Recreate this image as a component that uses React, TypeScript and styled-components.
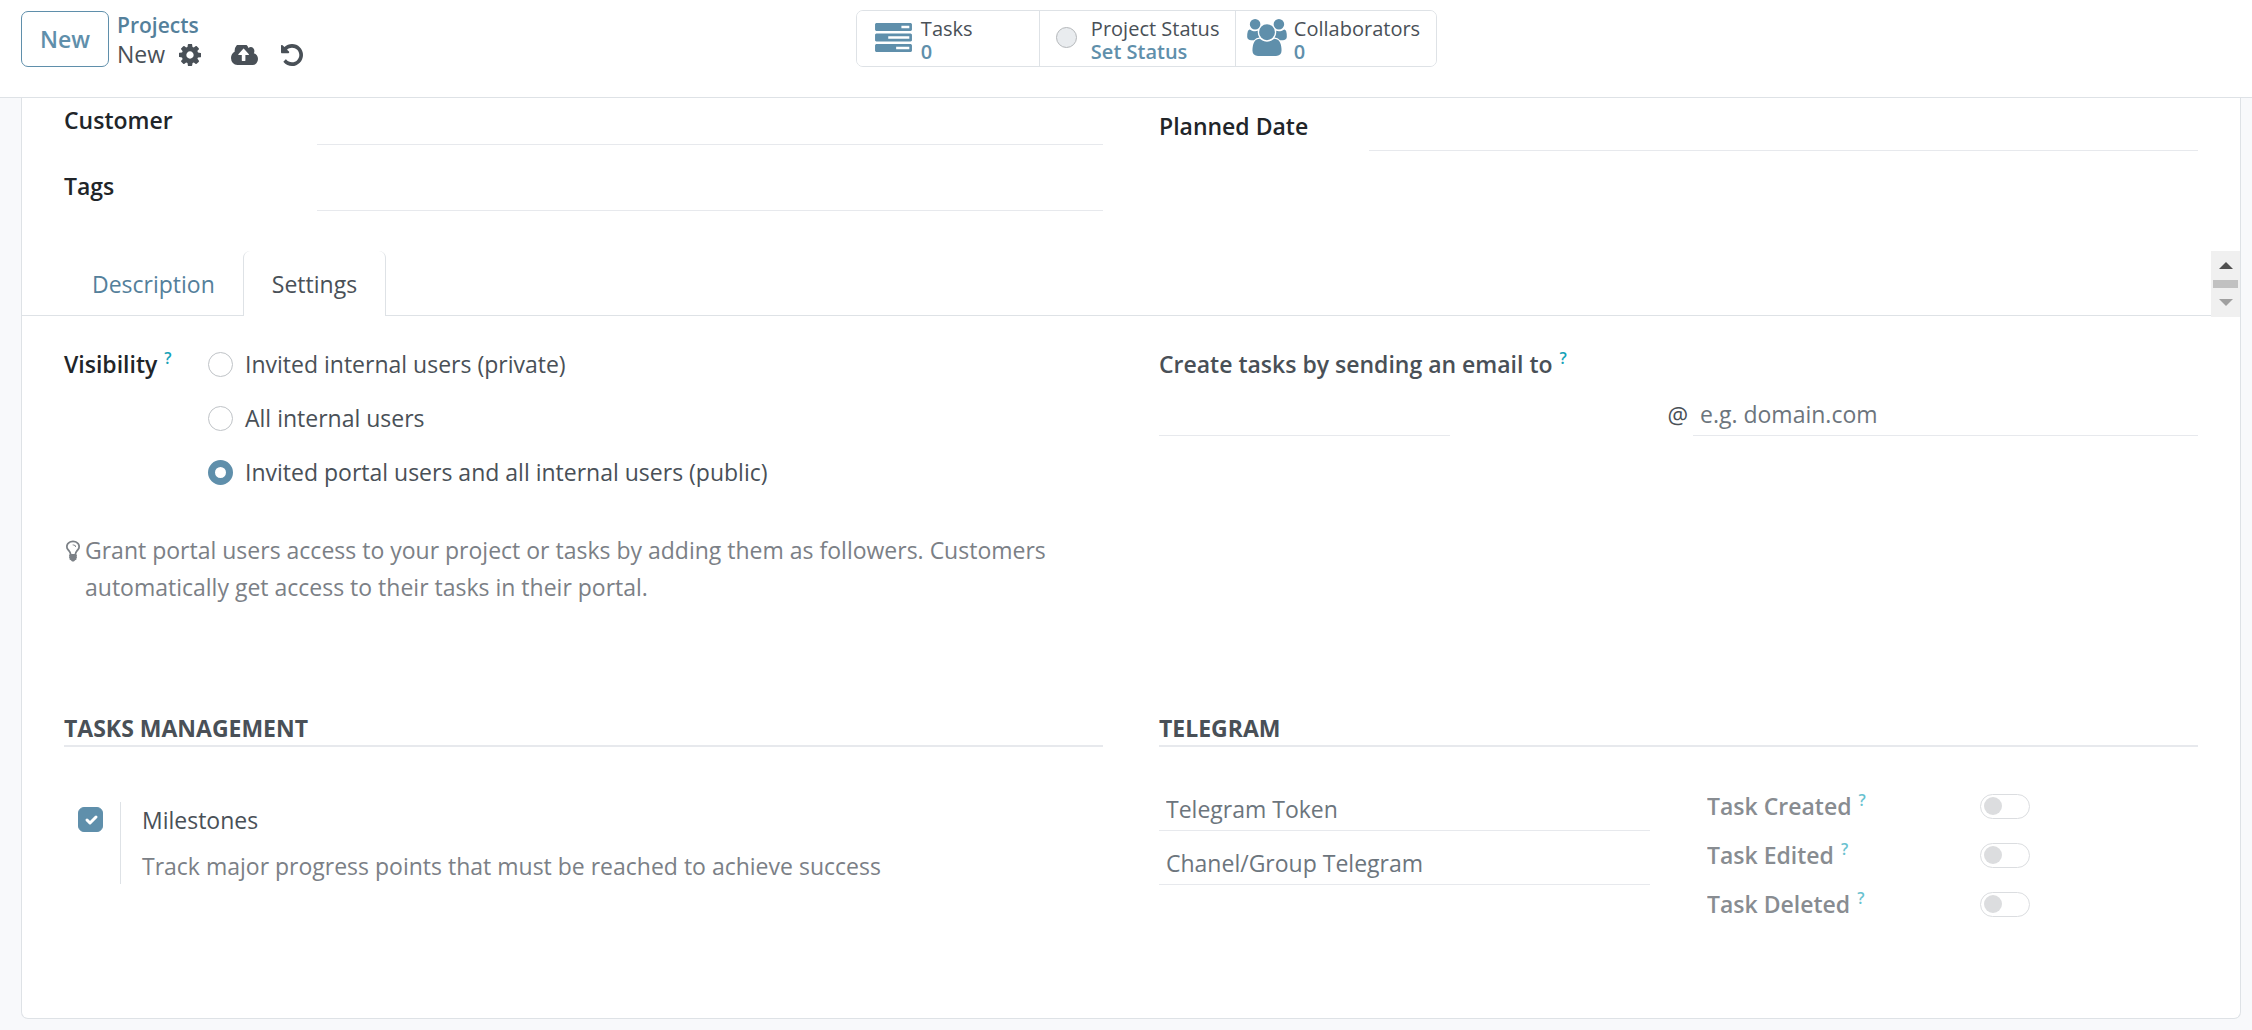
import React, { useId, useState } from "react";
import styled, { createGlobalStyle } from "styled-components";

const GlobalStyle = createGlobalStyle`
  *, *::before, *::after { box-sizing: border-box; }
  body {
    margin: 0;
    background: #f8f9fb;
    color: #495057;
    font-family: "Open Sans", "Noto Sans", sans-serif;
    font-size: 23px;
    line-height: 36px;
  }
  button, input { font: inherit; color: inherit; }
  h2, p { margin: 0; font: inherit; }
`;

const accent = "#5f8fab";
const line = "#dee2e6";
const softLine = "#e7e9ed";

/* ---------- icons ---------- */

const Svg = styled.svg<{ $w: number; $h: number }>`
  display: block;
  flex: none;
  width: ${(p) => p.$w}px;
  height: ${(p) => p.$h}px;
  fill: currentColor;
`;

const GearIcon = () => (
  <Svg $w={22} $h={22} viewBox="128 128 1536 1536" aria-hidden="true">
    <path d="M1152 896q0-106-75-181t-181-75-181 75-75 181 75 181 181 75 181-75 75-181zm512-109v222q0 12-8 23t-20 13l-185 28q-19 54-39 91 35 50 107 138 10 12 10 25t-9 23q-27 37-99 108t-94 71q-12 0-26-9l-138-108q-44 23-91 38-16 136-29 186-7 28-36 28h-222q-14 0-24.5-8.5t-11.5-21.5l-28-184q-49-16-90-37l-141 107q-10 9-25 9-14 0-25-11-126-114-165-168-7-10-7-23 0-12 8-23 15-21 51-66.5t54-70.5q-27-50-41-99l-183-27q-13-2-21-12.5t-8-23.5v-222q0-12 8-23t19-13l186-28q14-46 39-92-40-57-107-138-10-12-10-24 0-10 9-23 26-36 98.5-107.5t94.5-71.5q13 0 26 10l138 107q44-23 91-38 16-136 29-186 7-28 36-28h222q14 0 24.5 8.5t11.5 21.5l28 184q49 16 90 37l142-107q9-9 24-9 13 0 25 10 129 119 165 170 7 8 7 22 0 12-8 23-15 21-51 66.5t-54 70.5q26 50 41 98l183 28q13 2 21 12.5t8 23.5z" />
  </Svg>
);

const CloudUploadIcon = () => (
  <Svg $w={27} $h={20} viewBox="-64 256 1920 1280" preserveAspectRatio="none" aria-hidden="true">
    <path d="M1216 864q0-14-9-23l-352-352q-9-9-23-9t-23 9l-351 351q-10 12-10 24 0 14 9 23t23 9h224v352q0 13 9.500 22.500t22.500 9.500h192q13 0 22.500-9.500t9.500-22.500v-352h224q13 0 22.500-9.500t9.500-22.500zm640 288q0 159-112.500 271.500t-271.500 112.500h-1088q-185 0-316.500-131.500t-131.500-316.500q0-130 70-240t188-165q-2-30-2-43 0-212 150-362t362-150q156 0 285.500 87t188.500 231q71-62 166-62 106 0 181 75t75 181q0 76-41 138 130 31 213.500 135.500t83.500 238.500z" />
  </Svg>
);

const UndoIcon = () => (
  <Svg $w={22} $h={22} viewBox="128 128 1536 1536" aria-hidden="true">
    <path d="M1664 896q0 156-61 298t-164 245-245 164-298 61q-172 0-327-72.5t-264-204.5q-7-10-6.5-22.5t8.5-20.5l137-138q10-9 25-9 16 2 23 12 73 95 179 147t225 52q104 0 198.5-40.5t163.5-109.5 109.5-163.5 40.5-198.5-40.5-198.5-109.5-163.5-163.5-109.5-198.5-40.5q-98 0-188 35.5t-160 101.5l137 138q31 30 14 69-17 40-59 40h-448q-26 0-45-19t-19-45v-448q0-42 40-59 39-17 69 14l130 129q107-101 244.5-156.5t284.5-55.5q156 0 298 61t245 164 164 245 61 298z" />
  </Svg>
);

const TasksIcon = () => (
  <Svg $w={37} $h={29} viewBox="0 128 1792 1408" aria-hidden="true">
    <path d="M1024 1408h640v-128h-640v128zm-384-512h1024v-128h-1024v128zm640-512h384v-128h-384v128zm512 832v256q0 26-19 45t-45 19h-1664q-26 0-45-19t-19-45v-256q0-26 19-45t45-19h1664q26 0 45 19t19 45zm0-512v256q0 26-19 45t-45 19h-1664q-26 0-45-19t-19-45v-256q0-26 19-45t45-19h1664q26 0 45 19t19 45zm0-512v256q0 26-19 45t-45 19h-1664q-26 0-45-19t-19-45v-256q0-26 19-45t45-19h1664q26 0 45 19t19 45z" />
  </Svg>
);

const UsersIcon = () => (
  <Svg $w={40} $h={37} viewBox="0 0 1920 1792" aria-hidden="true">
    <path d="M593 896q-162 5-265 128h-134q-82 0-138-40.5t-56-118.5q0-353 124-353 6 0 43.500 21t97.500 42.500 119 21.500q67 0 133-23-5 37-5 66 0 139 81 256zm1071 637q0 120-73 189.500t-194 69.500h-874q-121 0-194-69.500t-73-189.500q0-53 3.500-103.500t14-109 26.500-108.500 43-97.500 62-81 85.500-53.500 111.500-20q10 0 43 21.500t73 48 107 48 135 21.500 135-21.500 107-48 73-48 43-21.500q61 0 111.500 20t85.500 53.500 62 81 43 97.500 26.500 108.500 14 109 3.500 103.500zm-1024-1277q0 106-75 181t-181 75-181-75-75-181 75-181 181-75 181 75 75 181zm704 384q0 159-112.500 271.500t-271.500 112.500-271.500-112.500-112.500-271.500 112.500-271.500 271.500-112.500 271.500 112.500 112.500 271.500zm576 225q0 78-56 118.500t-138 40.500h-134q-103-123-265-128 81-117 81-256 0-29-5-66 66 23 133 23 59 0 119-21.500t97.500-42.500 43.500-21q124 0 124 353zm-128-609q0 106-75 181t-181 75-181-75-75-181 75-181 181-75 181 75 75 181z" />
  </Svg>
);

const BulbIcon = () => (
  <Svg $w={14} $h={24} viewBox="384 128 1024 1664" aria-hidden="true">
    <path d="M1120 640q0 13-9.5 22.5t-22.5 9.5-22.5-9.5-9.5-22.5q0-46-54-71t-106-25q-13 0-22.5-9.5t-9.5-22.5 9.5-22.5 22.5-9.5q50 0 99.5 16t87 54 37.5 90zm160 0q0-72-34.5-134t-90-101.5-123-62-136.5-22.5-136.5 22.5-123 62-90 101.5-34.5 134q0 101 68 180 10 11 30.5 33t30.5 33q128 153 141 298h228q13-145 141-298 10-11 30.5-33t30.5-33q68-79 68-180zm128 0q0 155-103 268-45 49-74.5 87t-59.5 95.5-34 107.5q47 28 47 82 0 37-25 64 25 27 25 64 0 52-45 81 13 23 13 47 0 46-31.5 71t-77.5 25q-20 44-60 70t-87 26-87-26-60-70q-46 0-77.5-25t-31.5-71q0-24 13-47-45-29-45-81 0-37 25-64-25-27-25-64 0-54 47-82-4-50-34-107.5t-59.5-95.5-74.5-87q-103-113-103-268 0-99 44.5-184.5t117-142 164-89 186.5-32.5 186.5 32.5 164 89 117 142 44.500 184.500z" />
  </Svg>
);

/* ---------- control panel ---------- */

const ControlPanel = styled.header`
  display: grid;
  grid-template-columns: 41fr auto 39fr;
  align-items: start;
  padding: 10px 21px 28px;
  background: #fff;
  border-bottom: 1px solid ${line};
`;

const PanelLeft = styled.div`
  display: flex;
  gap: 8px;
  padding-top: 1px;
`;

const NewButton = styled.button`
  height: 56px;
  padding: 0 18px;
  border: 1px solid ${accent};
  border-radius: 7px;
  background: #fff;
  color: ${accent};
  font-weight: 600;
`;

const Breadcrumb = styled.nav`
  display: flex;
  flex-direction: column;
  line-height: 29px;
`;

const CrumbLink = styled.a`
  color: #54809b;
  font-weight: 600;
  font-size: 21px;
  text-decoration: none;
`;

const CrumbCurrent = styled.div`
  display: flex;
  align-items: center;
`;

const IconButton = styled.button<{ $gap: number }>`
  margin-left: ${(p) => p.$gap}px;
  padding: 0;
  border: 0;
  background: none;
  color: #495057;
`;

const StatButtons = styled.div`
  display: flex;
  border: 1px solid ${line};
  border-radius: 7px;
  overflow: hidden;
`;

const StatButton = styled.button<{ $width: number; $pad: number; $gap: number }>`
  display: flex;
  align-items: center;
  gap: ${(p) => p.$gap}px;
  width: ${(p) => p.$width}px;
  height: 55px;
  padding: 0 0 2px ${(p) => p.$pad}px;
  border: 0;
  background: #fff;
  color: ${accent};
  text-align: left;
  & + & { border-left: 1px solid ${line}; }
`;

const StatText = styled.span`
  display: flex;
  flex-direction: column;
  padding-top: 4px;
  font-size: 20px;
  line-height: 23px;
  white-space: nowrap;
`;

const StatLabel = styled.span`
  color: #495057;
`;

const StatValue = styled.span`
  font-weight: 600;
`;

const StatusDot = styled.span`
  width: 21px;
  height: 21px;
  border: 1px solid #b4b7ba;
  border-radius: 50%;
  background: #e9ecef;
`;

/* ---------- sheet ---------- */

const Main = styled.main`
  padding: 0 11px 11px 21px;
`;

const Sheet = styled.form`
  padding-bottom: 96px;
  background: #fff;
  border: 1px solid ${line};
  border-top: 0;
  border-radius: 0 0 7px 7px;
`;

const Columns = styled.div`
  display: grid;
  grid-template-columns: 1fr 1fr;
  column-gap: 56px;
  padding: 0 42px;
`;

const FieldColumn = styled.div<{ $top: number; $label: number }>`
  display: grid;
  grid-template-columns: ${(p) => p.$label}px 1fr;
  align-content: start;
  align-items: end;
  row-gap: 23px;
  padding: ${(p) => p.$top}px 0 40px;
`;

const FieldLabel = styled.label`
  padding-bottom: 7px;
  color: #212529;
  font-weight: 600;
`;

const TextInput = styled.input`
  width: 100%;
  min-width: 0;
  height: 43px;
  padding: 0 7px;
  border: 0;
  border-bottom: 1px solid ${softLine};
  border-radius: 0;
  background: transparent;
  outline: none;
  &::placeholder { color: #6c757d; opacity: 1; }
`;

/* ---------- tabs ---------- */

const TabStrip = styled.div`
  display: flex;
  height: 65px;
  border-bottom: 1px solid ${line};
`;

const TabList = styled.div`
  display: flex;
  flex: 1;
  padding-left: 42px;
`;

const Tab = styled.button<{ $active: boolean }>`
  height: 65px;
  padding: 0 28px;
  border: solid ${line};
  border-width: ${(p) => (p.$active ? "0 1px" : "0")};
  border-radius: 7px 7px 0 0;
  background: ${(p) => (p.$active ? "#fff" : "transparent")};
  color: ${(p) => (p.$active ? "#495057" : "#54809b")};
`;

const ScrollTrack = styled.div`
  display: flex;
  flex-direction: column;
  justify-content: space-between;
  align-items: center;
  width: 29px;
  height: 66px;
  background: #f0f0f0;
`;

const ScrollButton = styled.button`
  display: grid;
  place-items: center;
  width: 29px;
  height: 29px;
  padding: 0;
  border: 0;
  background: none;
`;

const Arrow = styled.span<{ $down?: boolean }>`
  border: 7px solid transparent;
  ${(p) =>
    p.$down
      ? "border-top-color: #a0a0a0; border-bottom: 0;"
      : "border-bottom-color: #505050; border-top: 0;"}
`;

const Thumb = styled.div`
  width: 25px;
  height: 8px;
  background: #c1c1c1;
`;

/* ---------- settings tab ---------- */

const Block = styled.div`
  padding-top: 30px;
`;

const Help = styled.sup`
  margin-left: 7px;
  color: #17a2b8;
  font-size: 16px;
  font-weight: 600;
  line-height: 0;
  vertical-align: 9px;
`;

const VisibilityGroup = styled.div`
  display: grid;
  grid-template-columns: 144px 1fr;
`;

const StrongLabel = styled.span<{ $dark?: boolean }>`
  color: ${(p) => (p.$dark ? "#212529" : "#495057")};
  font-weight: 600;
`;

const RadioList = styled.div`
  display: flex;
  flex-direction: column;
  gap: 18px;
`;

const RadioRow = styled.label`
  display: flex;
  align-items: center;
  gap: 12px;
`;

const Radio = styled.input`
  appearance: none;
  flex: none;
  width: 25px;
  height: 25px;
  margin: 0;
  border: 1px solid #bfc3c7;
  border-radius: 50%;
  background: #fff;
  &:checked { border: 7px solid ${accent}; }
`;

const Note = styled.div`
  display: flex;
  gap: 5px;
  margin-top: 42px;
  padding-left: 2px;
  color: #7b8086;
  line-height: 37px;
  svg { margin-top: 7px; }
`;

const AliasRow = styled.div`
  display: grid;
  grid-template-columns: 291fr 243fr 505fr;
  align-items: center;
  margin-top: 11px;
`;

const At = styled.span`
  padding-right: 5px;
  text-align: right;
`;

const SectionTitle = styled.h2`
  margin-top: 105px;
  border-bottom: 2px solid ${softLine};
  font-size: 23px;
  font-weight: 700;
  line-height: 34px;
  text-transform: uppercase;
`;

const SettingBox = styled.div`
  display: grid;
  grid-template-columns: 42px 1fr;
  margin-top: 55px;
  padding-left: 14px;
`;

const Checkbox = styled.input`
  appearance: none;
  width: 25px;
  height: 25px;
  margin: 5px 0 0;
  border: 1px solid #bfc3c7;
  border-radius: 6px;
  background: #fff;
  &:checked {
    border-color: ${accent};
    background: ${accent} url("data:image/svg+xml,%3Csvg xmlns='http://www.w3.org/2000/svg' viewBox='0 0 20 20'%3E%3Cpath fill='none' stroke='%23fff' stroke-linecap='round' stroke-linejoin='round' stroke-width='3' d='m6 10 3 3 6-6'/%3E%3C/svg%3E") center / 20px no-repeat;
  }
`;

const SettingText = styled.div`
  display: flex;
  flex-direction: column;
  gap: 10px;
  padding-left: 21px;
  border-left: 1px solid ${line};
`;

const Muted = styled.p`
  color: #7b8086;
`;

const TelegramGrid = styled.div`
  display: grid;
  grid-template-columns: 1fr 1fr;
  column-gap: 57px;
  margin-top: 41px;
`;

const TokenFields = styled.div`
  display: flex;
  flex-direction: column;
  gap: 11px;
`;

const SwitchList = styled.div`
  display: flex;
  flex-direction: column;
  gap: 13px;
`;

const SwitchRow = styled.label`
  display: grid;
  grid-template-columns: 273px auto;
  align-items: center;
  justify-content: start;
  font-weight: 600;
  opacity: 0.65;
`;

const Switch = styled.input`
  appearance: none;
  display: flex;
  align-items: center;
  width: 50px;
  height: 25px;
  margin: 0;
  padding: 0 3px;
  border: 1px solid #c9ccd0;
  border-radius: 13px;
  background: #fff;
  &::before {
    content: "";
    width: 18px;
    height: 18px;
    border-radius: 50%;
    background: #cacccf;
  }
  &:checked { justify-content: flex-end; }
`;

const visibilityOptions = [
  "Invited internal users (private)",
  "All internal users",
  "Invited portal users and all internal users (public)",
];

const events = ["Task Created", "Task Edited", "Task Deleted"];

function Field({ label }: { label: string }) {
  const id = useId();
  return (
    <>
      <FieldLabel htmlFor={id}>{label}</FieldLabel>
      <TextInput id={id} type="text" />
    </>
  );
}

export default function App() {
  const [tab, setTab] = useState("Settings");
  const [visibility, setVisibility] = useState(2);
  return (
    <>
      <GlobalStyle />
      <ControlPanel>
        <PanelLeft>
          <NewButton type="button">New</NewButton>
          <Breadcrumb aria-label="Breadcrumb">
            <CrumbLink href="#projects">Projects</CrumbLink>
            <CrumbCurrent>
              <span>New</span>
              <IconButton $gap={14} type="button" aria-label="Actions">
                <GearIcon />
              </IconButton>
              <IconButton $gap={30} type="button" aria-label="Save">
                <CloudUploadIcon />
              </IconButton>
              <IconButton $gap={23} type="button" aria-label="Discard">
                <UndoIcon />
              </IconButton>
            </CrumbCurrent>
          </Breadcrumb>
        </PanelLeft>
        <StatButtons>
          <StatButton type="button" $width={182} $pad={18} $gap={9}>
            <TasksIcon />
            <StatText>
              <StatLabel>Tasks</StatLabel>
              <StatValue>0</StatValue>
            </StatText>
          </StatButton>
          <StatButton type="button" $width={196} $pad={16} $gap={14}>
            <StatusDot />
            <StatText>
              <StatLabel>Project Status</StatLabel>
              <StatValue>Set Status</StatValue>
            </StatText>
          </StatButton>
          <StatButton type="button" $width={201} $pad={11} $gap={7}>
            <UsersIcon />
            <StatText>
              <StatLabel>Collaborators</StatLabel>
              <StatValue>0</StatValue>
            </StatText>
          </StatButton>
        </StatButtons>
      </ControlPanel>

      <Main>
        <Sheet onSubmit={(e) => e.preventDefault()}>
          <Columns>
            <FieldColumn $top={4} $label={253}>
              <Field label="Customer" />
              <Field label="Tags" />
            </FieldColumn>
            <FieldColumn $top={10} $label={210}>
              <Field label="Planned Date" />
            </FieldColumn>
          </Columns>

          <TabStrip>
            <TabList role="tablist">
              {["Description", "Settings"].map((name) => (
                <Tab
                  key={name}
                  type="button"
                  role="tab"
                  aria-selected={tab === name}
                  $active={tab === name}
                  onClick={() => setTab(name)}
                >
                  {name}
                </Tab>
              ))}
            </TabList>
            <ScrollTrack>
              <ScrollButton type="button" aria-label="Scroll up">
                <Arrow />
              </ScrollButton>
              <Thumb />
              <ScrollButton type="button" aria-label="Scroll down">
                <Arrow $down />
              </ScrollButton>
            </ScrollTrack>
          </TabStrip>

          <Columns>
            <Block>
              <VisibilityGroup role="radiogroup" aria-labelledby="visibility-label">
                <StrongLabel $dark id="visibility-label">
                  Visibility<Help>?</Help>
                </StrongLabel>
                <RadioList>
                  {visibilityOptions.map((option, i) => (
                    <RadioRow key={option}>
                      <Radio
                        type="radio"
                        name="visibility"
                        checked={visibility === i}
                        onChange={() => setVisibility(i)}
                      />
                      {option}
                    </RadioRow>
                  ))}
                </RadioList>
              </VisibilityGroup>
              <Note>
                <BulbIcon />
                <p>
                  Grant portal users access to your project or tasks by adding them as followers.
                  Customers automatically get access to their tasks in their portal.
                </p>
              </Note>
            </Block>

            <Block>
              <StrongLabel as="label" htmlFor="alias-name">
                Create tasks by sending an email to<Help>?</Help>
              </StrongLabel>
              <AliasRow>
                <TextInput id="alias-name" type="text" />
                <At>@</At>
                <TextInput type="text" aria-label="Alias domain" placeholder="e.g. domain.com" />
              </AliasRow>
            </Block>

            <section>
              <SectionTitle>Tasks Management</SectionTitle>
              <SettingBox>
                <Checkbox type="checkbox" id="milestones" defaultChecked />
                <SettingText>
                  <label htmlFor="milestones">Milestones</label>
                  <Muted>Track major progress points that must be reached to achieve success</Muted>
                </SettingText>
              </SettingBox>
            </section>

            <section>
              <SectionTitle>Telegram</SectionTitle>
              <TelegramGrid>
                <TokenFields>
                  <TextInput type="text" aria-label="Telegram Token" placeholder="Telegram Token" />
                  <TextInput
                    type="text"
                    aria-label="Chanel/Group Telegram"
                    placeholder="Chanel/Group Telegram"
                  />
                </TokenFields>
                <SwitchList>
                  {events.map((name) => (
                    <SwitchRow key={name}>
                      <span>
                        {name}
                        <Help>?</Help>
                      </span>
                      <Switch type="checkbox" role="switch" />
                    </SwitchRow>
                  ))}
                </SwitchList>
              </TelegramGrid>
            </section>
          </Columns>
        </Sheet>
      </Main>
    </>
  );
}
